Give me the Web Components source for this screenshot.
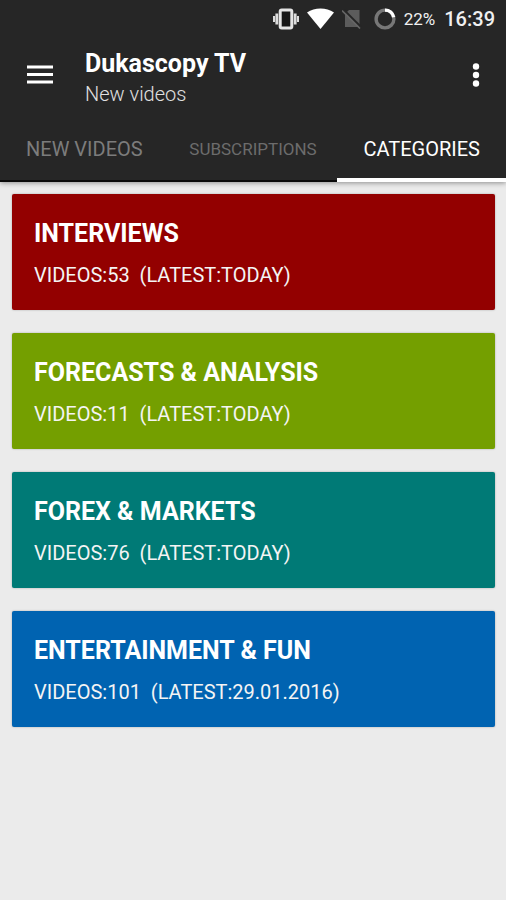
<!DOCTYPE html>
<html lang="en">
<head>
<meta charset="UTF-8">
<meta name="viewport" content="width=device-width, initial-scale=1">
<title>Dukascopy TV</title>
<style>
    body {
        margin: 0;
        background: #ebebeb;
        font-family: Roboto, "Noto Sans", sans-serif;
    }
</style>
</head>
<body>
<tv-app>
    <status-bar slot="header" battery="22%" time="16:39"></status-bar>
    <app-bar slot="header" title-text="Dukascopy TV" subtitle="New videos"></app-bar>
    <tab-bar slot="header">
        <tab-item>NEW VIDEOS</tab-item>
        <tab-item small>SUBSCRIPTIONS</tab-item>
        <tab-item active>CATEGORIES</tab-item>
    </tab-bar>
    <category-card color="#930000" videos="53" latest="TODAY">INTERVIEWS</category-card>
    <category-card color="#749f00" videos="11" latest="TODAY">FORECASTS &amp; ANALYSIS</category-card>
    <category-card color="#007a76" videos="76" latest="TODAY">FOREX &amp; MARKETS</category-card>
    <category-card color="#0063b1" videos="101" latest="29.01.2016">ENTERTAINMENT &amp; FUN</category-card>
</tv-app>

<script>
// Page shell: dark header and a list of cards
class TvApp extends HTMLElement {
    constructor() {
        super();
        this.attachShadow({ mode: 'open' });
        this.shadowRoot.innerHTML = `
            <style>
                :host {
                    display: block;
                }

                header {
                    background: #262626;
                    box-shadow: 0 1px 5px rgba(0,0,0,0.4);
                }

                main {
                    display: grid;
                    gap: 23px;
                    padding: 12px 11px 12px 12px;
                }
            </style>

            <header><slot name="header"></slot></header>
            <main><slot></slot></main>
        `;
    }
}

// Android status bar
class StatusBar extends HTMLElement {
    connectedCallback() {
        this.attachShadow({ mode: 'open' });
        this.shadowRoot.innerHTML = `
            <style>
                :host {
                    display: flex;
                    align-items: center;
                    justify-content: flex-end;
                    height: 37px;
                    padding-right: 11px;
                    color: #f0f0f0;
                }

                svg {
                    display: block;
                    flex: none;
                }

                .vibrate { margin-right: 8px; }
                .wifi { margin-right: 8px; }
                .sim { margin-right: 12px; }
                .ring { margin-right: 8px; }

                .battery {
                    font-size: 17px;
                    margin-right: 9px;
                }

                .time {
                    font-size: 20px;
                    font-weight: 500;
                }
            </style>

            <svg class="vibrate" width="26" height="22" viewBox="0 0 26 22">
                <rect x="7.200" y="2" width="11.600" height="18" rx="1.500" fill="#161616" stroke="#e4e4e4" stroke-width="3"/>
                <path d="M1 8v6M25 8v6" stroke="#ddd" stroke-width="2"/>
                <path d="M3.800 5.500v11M22.200 5.500v11" stroke="#ddd" stroke-width="2.800"/>
            </svg>
            <svg class="wifi" width="27" height="21" viewBox="0 0 27 21">
                <path d="M0 4.5C4 1.7 8.500 .5 13.500 .5S23 1.700 27 4.500L13.500 21z" fill="#fff"/>
            </svg>
            <svg class="sim" width="20" height="20" viewBox="0 0 20 20">
                <path d="M7 1h10.500v17H3V5z" fill="#5c5c5c"/>
                <path d="M1 0l19 19" stroke="#262626" stroke-width="2"/>
                <path d="M0 1.500l18 18" stroke="#666" stroke-width="1.600"/>
            </svg>
            <svg class="ring" width="22" height="22" viewBox="0 0 22 22">
                <circle cx="11" cy="11" r="8.900" fill="none" stroke="#777" stroke-width="3.400"/>
                <path d="M11 2.100A8.900 8.900 0 0 1 19.700 9.300" fill="none" stroke="#fff" stroke-width="3.400"/>
            </svg>
            <span class="battery">${this.getAttribute('battery')}</span>
            <span class="time">${this.getAttribute('time')}</span>
        `;
    }
}

class AppBar extends HTMLElement {
    connectedCallback() {
        this.attachShadow({ mode: 'open' });
        this.shadowRoot.innerHTML = `
            <style>
                :host {
                    display: flex;
                    align-items: center;
                    height: 76px;
                    padding: 0 10px 0 20px;
                    color: #fff;
                }

                button {
                    display: grid;
                    place-items: center;
                    width: 40px;
                    height: 40px;
                    padding: 0;
                    border: none;
                    background: none;
                    color: inherit;
                    cursor: pointer;
                }

                .titles {
                    flex: 1;
                    padding: 6px 0 0 25px;
                }

                h1 {
                    margin: 0;
                    font-size: 25px;
                    line-height: 32px;
                    font-weight: 700;
                }

                p {
                    margin: 0;
                    font-size: 20px;
                    line-height: 28px;
                    color: #e0e0e0;
                    font-weight: 300;
                }
            </style>

            <button aria-label="Menu">
                <svg width="28" height="20" viewBox="0 0 28 20">
                    <path d="M1 2h26M1 9.500h26M1 17h26" stroke="#fff" stroke-width="3"/>
                </svg>
            </button>
            <div class="titles">
                <h1>${this.getAttribute('title-text')}</h1>
                <p>${this.getAttribute('subtitle')}</p>
            </div>
            <button aria-label="More options">
                <svg width="8" height="26" viewBox="0 0 8 26" fill="#fff">
                    <circle cx="4" cy="4.500" r="3.200"/>
                    <circle cx="4" cy="13" r="3.200"/>
                    <circle cx="4" cy="21.500" r="3.200"/>
                </svg>
            </button>
        `;
    }
}

class TabBar extends HTMLElement {
    constructor() {
        super();
        this.attachShadow({ mode: 'open' });
        this.shadowRoot.innerHTML = `
            <style>
                :host {
                    display: grid;
                    grid-template-columns: repeat(3, 1fr);
                    height: 69px;
                }
            </style>

            <slot></slot>
        `;
    }
}

class TabItem extends HTMLElement {
    constructor() {
        super();
        this.attachShadow({ mode: 'open' });
        this.shadowRoot.innerHTML = `
            <style>
                :host {
                    display: grid;
                }

                button {
                    padding: 4px 0 0;
                    border: none;
                    border-bottom: 2px solid #0a0a0a;
                    background: none;
                    color: #7c7c7c;
                    font: 400 20px/24px Roboto, "Noto Sans", sans-serif;
                    cursor: pointer;
                }

                :host([small]) button {
                    color: #6c6c6c;
                    font-size: 17px;
                }

                :host([active]) button {
                    padding-top: 6px;
                    border-bottom: 4px solid #fff;
                    color: #fff;
                }
            </style>

            <button><slot></slot></button>
        `;
    }
}

// One category with its number of videos
class CategoryCard extends HTMLElement {
    connectedCallback() {
        this.attachShadow({ mode: 'open' });
        this.shadowRoot.innerHTML = `
            <style>
                :host {
                    display: block;
                    padding: 22px 22px 21px;
                    border-radius: 2px;
                    background: ${this.getAttribute('color')};
                    box-shadow: 0 0 2px rgba(0,0,0,0.3);
                    color: #fff;
                }

                h2 {
                    margin: 0 0 9px;
                    font-size: 25px;
                    line-height: 36px;
                    font-weight: 700;
                }

                p {
                    margin: 0;
                    font-size: 20px;
                    line-height: 28px;
                    color: #f4f4f4;
                    white-space: pre-wrap;
                }
            </style>

            <h2><slot></slot></h2>
            <p>VIDEOS:${this.getAttribute('videos')}  (LATEST:${this.getAttribute('latest')})</p>
        `;
    }
}

customElements.define('tv-app', TvApp);
customElements.define('status-bar', StatusBar);
customElements.define('app-bar', AppBar);
customElements.define('tab-bar', TabBar);
customElements.define('tab-item', TabItem);
customElements.define('category-card', CategoryCard);
</script>
</body>
</html>
